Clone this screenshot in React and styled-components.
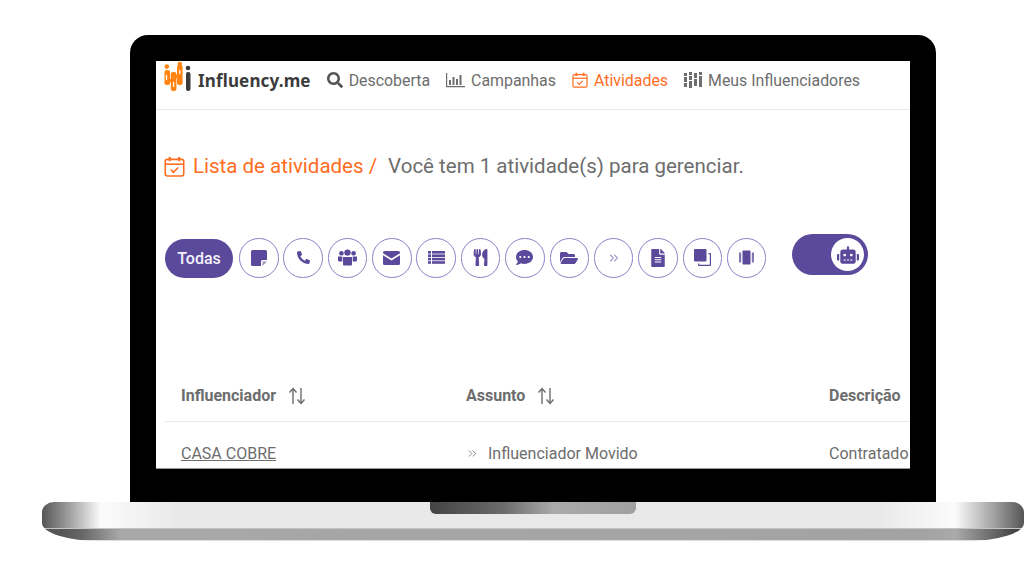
import styled, { createGlobalStyle } from "styled-components";
import { FaSearch, FaPhoneAlt, FaUtensils, FaCommentDots, FaFolderOpen, FaFileAlt, FaRobot } from "react-icons/fa";
import { ChevronsRight } from "lucide-react";

const purple = "#5b4a9b";
const orange = "#ff6d1f";
const grey = "#6d6d6d";

const GlobalStyle = createGlobalStyle`
    html, body {
        margin: 0;
        background: #fff;
        font-family: Roboto, "Liberation Sans", sans-serif;
        overflow: hidden;
    }
`;

const Stage = styled.div`
    width: 1024px;
    height: 576px;
    padding-top: 35px;
    box-sizing: border-box;
`;

const Bezel = styled.div`
    width: 806px;
    height: 467px;
    margin-left: 130px;
    padding: 26px 26px 33px;
    box-sizing: border-box;
    background: #000;
    border-radius: 18px 18px 0 0;
`;

const Screen = styled.div`
    height: 408px;
    background: #fff;
    overflow: hidden;
    border-bottom: 1px solid #999;
    box-sizing: border-box;
`;

const Nav = styled.nav`
    height: 49px;
    display: flex;
    align-items: center;
    padding: 0 0 10px 8px;
    box-sizing: border-box;
    border-bottom: 1px solid #e8e8e8;
`;

const Brand = styled.div`
    display: flex;
    align-items: center;
    gap: 7px;
    margin-right: 16px;
    font-family: "Noto Sans", sans-serif;
    font-weight: 700;
    font-size: 17px;
    letter-spacing: 0.15px;
    color: #3c3c3c;
`;

const LogoMark = styled.svg`
    margin-bottom: 6px;
    flex: none;
`;

const NavItem = styled.a`
    display: flex;
    align-items: center;
    gap: 6px;
    margin-right: 16px;
    font-size: 15.9px;
    color: ${(p) => (p.$active ? orange : grey)};
    svg {
        flex: none;
    }
`;

const Heading = styled.div`
    display: flex;
    align-items: center;
    height: 30px;
    margin: 41px 0 0 8px;
    font-size: 20.5px;
`;

const HeadingTitle = styled.span`
    display: flex;
    align-items: center;
    gap: 8px;
    color: ${orange};
    margin-right: 11px;
`;

const HeadingText = styled.span`
    color: ${grey};
`;

const Filters = styled.div`
    display: flex;
    align-items: flex-start;
    margin: 53px 0 0 9px;
`;

const Todas = styled.button`
    width: 68px;
    height: 39px;
    margin: 5px 6px 0 0;
    padding: 0;
    border: 0;
    border-radius: 20px;
    background: ${purple};
    color: #f4f2fa;
    font: 500 16px Roboto, sans-serif;
`;

const RoundButton = styled.button`
    width: 39.5px;
    height: 39.5px;
    flex: none;
    margin: 4px 4.86px 0 0;
    padding: 0;
    display: flex;
    align-items: center;
    justify-content: center;
    background: #fff;
    border: 1px solid #8f80c6;
    border-radius: 50%;
    color: ${purple};
`;

const Toggle = styled.div`
    width: 76px;
    height: 41px;
    margin-left: 21px;
    padding-right: 4px;
    display: flex;
    align-items: center;
    justify-content: flex-end;
    box-sizing: border-box;
    background: ${purple};
    border-radius: 21px;
`;

const Knob = styled.div`
    width: 33px;
    height: 33px;
    display: flex;
    align-items: center;
    justify-content: center;
    background: #fff;
    border-radius: 50%;
    color: ${purple};
`;

const Table = styled.div`
    margin: 92px 0 0 9px;
    width: 800px;
`;

const Row = styled.div`
    display: grid;
    grid-template-columns: 285px 363px 1fr;
    align-items: center;
    padding-left: 16px;
    height: ${(p) => p.$height}px;
    font-size: 16px;
    color: ${grey};
    border-bottom: ${(p) => (p.$head ? "1px solid #e8e8e8" : "0")};
`;

const HeadCell = styled.span`
    display: flex;
    align-items: center;
    gap: 12px;
    font-size: 16px;
    font-weight: 700;
    color: ${grey};
`;

const Cell = styled.span`
    display: flex;
    align-items: center;
    gap: 9px;
    white-space: nowrap;
    color: ${grey};
`;

const Link = styled.a`
    color: ${grey};
    text-decoration: underline;
`;

const Base = styled.div`
    width: 982px;
    height: 39px;
    margin-left: 42px;
    overflow: hidden;
    border-radius: 12px 12px 58px 58px / 10px 10px 18px 18px;
`;

const BaseTop = styled.div`
    height: 26px;
    padding-left: 388px;
    background: linear-gradient(90deg, #555 0%, #a0a0a0 2.8%, #fbfbfb 6%, #e9e9e9 14%, #e9e9e9 85%, #fbfbfb 93%, #a0a0a0 97%, #555 100%);
`;

const Notch = styled.div`
    width: 206px;
    height: 12px;
    border-radius: 0 0 6px 6px;
    background: linear-gradient(90deg, #444 0%, #6a6a6a 35%, #aaa 60%, #a0a0a0 100%);
`;

const BaseBottom = styled.div`
    height: 13px;
    background: linear-gradient(90deg, #555 2%, #666 4%, #a8a8a8 8%, #a3a3a3 90%, #aaa 93%, #777 96%, #444 99%);
    border-top: 1px solid #c4c4c4;
    border-bottom: 1px solid #ddd;
    box-sizing: border-box;
`;

function Logo() {
    const bars = [
        [0.5, 8, 15], [6.8, 10, 19], [13, 3, 20],
    ];
    return (
        <LogoMark width="27" height="30" viewBox="0 0 27 30">
            {bars.map(([x, y, h]) => (
                <rect key={x} x={x} y={y} width="5.6" height={h} rx="2" fill="#ff8412" />
            ))}
            <rect x="5" y="17" width="3" height="3" fill="#ff8412" />
            <rect x="11.500" y="13" width="3" height="3" fill="#ff8412" />
            <path d="M2.500 13v5M9.600 20v5M15.800 8v4" stroke="#fff" strokeWidth="1.200" />
            <circle cx="2.800" cy="4.600" r="2.300" fill="#ff8412" />
            <circle cx="15.800" cy="2" r="2.200" fill="#ff8412" />
            <circle cx="24" cy="6" r="2.300" fill="#3c3c3c" />
            <rect x="22" y="10" width="4.500" height="19" rx="2" fill="#3c3c3c" />
        </LogoMark>
    );
}

function CalendarIcon({ size }) {
    return (
        <svg width={size} height={size} viewBox="0 0 20 20" fill="none" stroke="currentColor" strokeWidth="1.500">
            <rect x="1.200" y="3.200" width="17.600" height="15.800" rx="2" />
            <path d="M1.200 7.800h17.600" />
            <path d="M5.500 1v4M14.500 1v4" strokeWidth="2" />
            <path d="m6.500 13 2.500 2.500 4.500-4.500" />
        </svg>
    );
}

function BarsIcon() {
    return (
        <svg width="19" height="16" viewBox="0 0 19 16" fill={grey}>
            <path d="M0 1h1.200v13H19v1.200H0z" />
            <rect x="3" y="8" width="2" height="5" />
            <rect x="6.500" y="5" width="2" height="8" />
            <rect x="10" y="7" width="2" height="6" />
            <rect x="13.500" y="3" width="2" height="10" />
        </svg>
    );
}

function InfluencersIcon() {
    return (
        <svg width="18" height="18" viewBox="0 0 18 18" fill={grey}>
            <rect x="0" y="2" width="3" height="3" />
            <rect x="0" y="6" width="3" height="5" />
            <rect x="0" y="12" width="3" height="4" />
            <rect x="5" y="1" width="3" height="3" />
            <rect x="5" y="5" width="3" height="4" />
            <rect x="5" y="10" width="3" height="7" />
            <rect x="10" y="2" width="3" height="5" />
            <rect x="10" y="8" width="3" height="7" />
            <rect x="15" y="1" width="3" height="3" />
            <rect x="15" y="5" width="3" height="11" />
        </svg>
    );
}

function SortIcon() {
    return (
        <svg width="18" height="18" viewBox="0 0 18 18" fill="none" stroke={grey} strokeWidth="1.400">
            <path d="M5 17V2M1.500 5.500 5 1.500l3.500 4" />
            <path d="M13 1v15M9.500 12.500l3.500 4 3.500-4" />
        </svg>
    );
}

function NoteIcon() {
    return (
        <svg width="16" height="16" viewBox="0 0 16 16" fill="currentColor">
            <path d="M1.500 0h13A1.500 1.500 0 0 1 16 1.500V10h-4.500A1.500 1.500 0 0 0 10 11.500V16H1.500A1.500 1.500 0 0 1 0 14.500v-13A1.500 1.500 0 0 1 1.500 0z" />
            <path d="M11.500 11.500H16L11.500 16z" opacity="0.6" />
        </svg>
    );
}

function GroupIcon() {
    return (
        <svg width="19" height="17" viewBox="0 0 19 17" fill="currentColor">
            <circle cx="9.500" cy="3.600" r="3.200" />
            <circle cx="3.400" cy="4.200" r="2.300" />
            <circle cx="15.600" cy="4.200" r="2.300" />
            <path d="M0 7.500h4.300v5H1a1 1 0 0 1-1-1zM19 7.500h-4.300v5H18a1 1 0 0 0 1-1z" />
            <path d="M5 8h9v7.500a1 1 0 0 1-1 1H6a1 1 0 0 1-1-1z" />
        </svg>
    );
}

function MailIcon() {
    return (
        <svg width="17" height="14" viewBox="0 0 17 14" fill="currentColor">
            <path d="M1.500 0h14A1.500 1.500 0 0 1 17 1.500v.7L8.500 7.500 0 2.200v-.7A1.500 1.500 0 0 1 1.500 0z" />
            <path d="M0 4.200 8.500 9.500 17 4.200v8.300a1.500 1.500 0 0 1-1.500 1.500h-14A1.500 1.500 0 0 1 0 12.500z" />
        </svg>
    );
}

function ListIcon() {
    return (
        <svg width="17" height="13" viewBox="0 0 17 13" fill="currentColor">
            {[0, 3.400, 6.800, 10.200].map((y) => (
                <g key={y}>
                    <rect x="0" y={y} width="3" height="2.600" />
                    <rect x="4" y={y} width="13" height="2.600" />
                </g>
            ))}
        </svg>
    );
}

function CopyIcon() {
    return (
        <svg width="17" height="17" viewBox="0 0 17 17" fill="currentColor">
            <rect x="0" y="0" width="12.500" height="12.500" rx="1" />
            <path d="M14.500 4H16a1 1 0 0 1 1 1v11a1 1 0 0 1-1 1H5a1 1 0 0 1-1-1v-1.500h1.200v1.300h10.600V5.200h-1.300z" />
        </svg>
    );
}

function CarouselIcon() {
    return (
        <svg width="15" height="15" viewBox="0 0 15 15" fill="currentColor">
            <rect x="3.500" y="0.500" width="8" height="14" rx="0.800" />
            <rect x="0" y="2.500" width="2.200" height="10" opacity="0.750" />
            <rect x="12.800" y="2.500" width="2.200" height="10" opacity="0.750" />
        </svg>
    );
}

const filterIcons = [
    <NoteIcon />, <FaPhoneAlt size={13} />, <GroupIcon />, <MailIcon />, <ListIcon />,
    <FaUtensils size={17} />, <FaCommentDots size={17} />, <FaFolderOpen size={18} />,
    <ChevronsRight size={14} strokeWidth={1.8} color="#8f80c6" />, <FaFileAlt size={18} />, <CopyIcon />, <CarouselIcon />,
];

export default function App() {
    return (
        <Stage>
            <GlobalStyle />
            <Bezel>
                <Screen>
                    <Nav>
                        <Brand><Logo />Influency.me</Brand>
                        <NavItem><FaSearch size={16} color="#555" />Descoberta</NavItem>
                        <NavItem><BarsIcon />Campanhas</NavItem>
                        <NavItem $active><CalendarIcon size={16} />Atividades</NavItem>
                        <NavItem><InfluencersIcon />Meus Influenciadores</NavItem>
                    </Nav>
                    <Heading>
                        <HeadingTitle><CalendarIcon size={21} />Lista de atividades /</HeadingTitle>
                        <HeadingText>Você tem 1 atividade(s) para gerenciar.</HeadingText>
                    </Heading>
                    <Filters>
                        <Todas>Todas</Todas>
                        {filterIcons.map((icon, i) => (
                            <RoundButton key={i}>{icon}</RoundButton>
                        ))}
                        <Toggle>
                            <Knob><FaRobot size={22} /></Knob>
                        </Toggle>
                    </Filters>
                    <Table>
                        <Row $head $height={51}>
                            <HeadCell>Influenciador <SortIcon /></HeadCell>
                            <HeadCell>Assunto <SortIcon /></HeadCell>
                            <HeadCell>Descrição</HeadCell>
                        </Row>
                        <Row $height={63}>
                            <Cell><Link>CASA COBRE</Link></Cell>
                            <Cell><ChevronsRight size={13} strokeWidth={1.5} />Influenciador Movido</Cell>
                            <Cell>Contratado</Cell>
                        </Row>
                    </Table>
                </Screen>
            </Bezel>
            <Base>
                <BaseTop><Notch /></BaseTop>
                <BaseBottom />
            </Base>
        </Stage>
    );
}
